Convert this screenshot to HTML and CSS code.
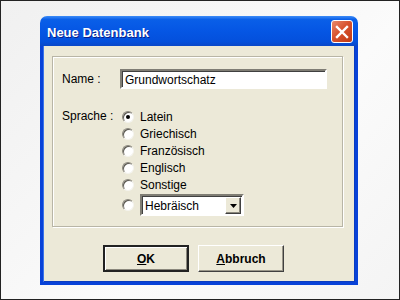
FILE: index.html
```html
<!DOCTYPE html>
<html>
<head>
	<meta charset="UTF-8">
	<title>Neue Datenbank</title>
	<link rel="stylesheet" href="styles.css">
</head>
<body>
	<div class="screen">
		<div class="window">
			<div class="titlebar">
				<span class="title">Neue Datenbank</span>
				<span class="close">
					<svg width="14" height="14" viewBox="0 0 14 14">
						<path d="M2 2 L12 12 M12 2 L2 12" stroke="#fff" stroke-width="2.4" stroke-linecap="square"/>
					</svg>
				</span>
			</div>
			<div class="client">
				<div class="group">
					<div class="row-name">
						<span class="label">Name :</span>
						<div class="textbox">Grundwortschatz</div>
					</div>
					<div class="row-lang">
						<span class="label">Sprache :</span>
						<div class="options">
							<div class="option"><span class="radio checked"></span>Latein</div>
							<div class="option"><span class="radio"></span>Griechisch</div>
							<div class="option"><span class="radio"></span>Französisch</div>
							<div class="option"><span class="radio"></span>Englisch</div>
							<div class="option"><span class="radio"></span>Sonstige</div>
							<div class="option combo-row">
								<span class="radio"></span>
								<div class="combo">
									<span class="combo-text">Hebräisch</span>
									<span class="combo-btn">
										<svg width="7" height="4" viewBox="0 0 7 4"><path d="M0 0 H7 L3.5 4 Z" fill="#000"/></svg>
									</span>
								</div>
							</div>
						</div>
					</div>
				</div>
				<div class="buttons">
					<button class="btn default"><u>O</u>K</button>
					<button class="btn"><u>A</u>bbruch</button>
				</div>
			</div>
		</div>
	</div>
</body>
</html>
```

FILE: styles.css
```css
body {
	margin: 0;
	padding: 0;
	font-family: "Liberation Sans", Arial, sans-serif;
}
.screen {
	width: 400px;
	height: 300px;
	box-sizing: border-box;
	border: 1px solid #222;
	background: linear-gradient(135deg, #f0f0f0 0%, #fbfbfb 60%, #f4f4f4 100%);
	padding: 15px 0 0 39px;
}
.window {
	width: 318px;
	height: 269px;
	display: flex;
	flex-direction: column;
}
.titlebar {
	height: 30px;
	border-radius: 7px 7px 0 0;
	background: linear-gradient(to bottom, #3d8cf7 0%, #0a5fe8 12%, #0556e4 50%, #0450dc 85%, #0a48c8 100%);
	display: flex;
	align-items: center;
	justify-content: space-between;
	padding: 0 5px 0 7px;
	box-sizing: border-box;
}
.title {
	color: #fff;
	font-weight: bold;
	font-size: 13px;
	text-shadow: 1px 1px 0 #0a1e8a;
	padding-top: 2px;
}
.close {
	width: 20px;
	height: 21px;
	border: 1px solid #fff;
	border-radius: 3px;
	background: linear-gradient(135deg, #e88a6c 0%, #d8532f 45%, #c03a14 100%);
	display: flex;
	align-items: center;
	justify-content: center;
	margin-top: 1px;
}
.client {
	flex: 1;
	background: #ece9d8;
	border: 3px solid #0842d8;
	border-top: none;
	box-shadow: inset 1px 0 0 #3a73ea, inset -1px 0 0 #0a3cc0, inset 0 -1px 0 #0a3cc0;
	padding: 10px 0 0 9px;
	display: flex;
	flex-direction: column;
}
.group {
	width: 291px;
	height: 171px;
	box-sizing: border-box;
	border: 1px solid #b8b5a6;
	box-shadow: inset 1px 1px 0 #fff, 1px 1px 0 #fff;
	padding: 12px 0 0 9px;
	font-size: 12px;
	color: #000;
}
.row-name {
	display: grid;
	grid-template-columns: 58px 207px;
	align-items: center;
}
.textbox {
	height: 20px;
	box-sizing: border-box;
	background: #fff;
	border: 2px solid;
	border-color: #7f7d74 #fff #fff #7f7d74;
	box-shadow: inset 1px 1px 0 #404040;
	padding: 2px 0 0 3px;
	line-height: 14px;
}
.row-lang {
	display: grid;
	grid-template-columns: 60px auto;
	margin-top: 19px;
}
.row-lang .label {
	line-height: 17px;
}
.options {
	display: flex;
	flex-direction: column;
}
.option {
	height: 17px;
	display: flex;
	align-items: center;
	gap: 6px;
}
.combo-row {
	height: 22px;
	margin-top: 1px;
}
.radio {
	width: 12px;
	height: 12px;
	box-sizing: border-box;
	border-radius: 50%;
	background: #fff;
	border: 1px solid;
	border-color: #8a877c #f4f3ee #f4f3ee #8a877c;
	box-shadow: inset 1px 1px 0 #5a5850;
	position: relative;
}
.radio.checked::after {
	content: "";
	position: absolute;
	left: 3px;
	top: 3px;
	width: 4px;
	height: 4px;
	border-radius: 50%;
	background: #000;
}
.combo {
	width: 104px;
	height: 22px;
	box-sizing: border-box;
	background: #fff;
	border: 2px solid;
	border-color: #7f7d74 #fff #fff #7f7d74;
	box-shadow: inset 1px 1px 0 #404040;
	display: flex;
	align-items: center;
	justify-content: space-between;
}
.combo-text {
	padding-left: 3px;
	padding-top: 1px;
}
.combo-btn {
	width: 16px;
	height: 17px;
	margin-right: 1px;
	margin-top: 1px;
	box-sizing: border-box;
	background: #ece9d8;
	border: 1px solid;
	border-color: #fff #404040 #404040 #fff;
	box-shadow: inset -1px -1px 0 #8a877c;
	display: flex;
	align-items: center;
	justify-content: center;
}
.buttons {
	display: flex;
	gap: 9px;
	margin: 18px 0 0 51px;
}
.btn {
	width: 86px;
	height: 27px;
	box-sizing: border-box;
	background: #ece9d8;
	border: 1px solid;
	border-color: #fff #404040 #404040 #fff;
	box-shadow: inset -1px -1px 0 #9a978a;
	font-family: "Liberation Sans", Arial, sans-serif;
	font-weight: bold;
	font-size: 12px;
	color: #000;
	padding: 0;
}
.btn.default {
	border: 2px solid #222;
	box-shadow: inset 1px 1px 0 #fff, inset -1px -1px 0 #8a877c;
}
```
